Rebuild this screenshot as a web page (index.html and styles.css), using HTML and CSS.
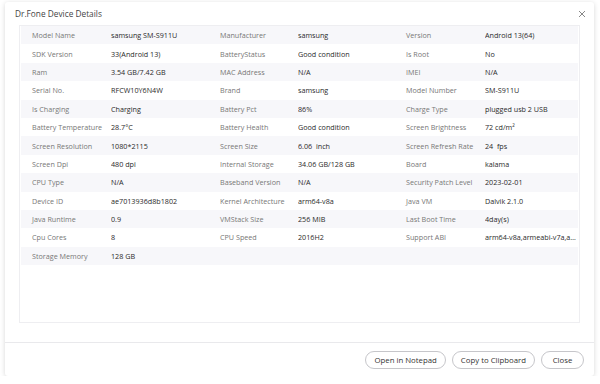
FILE: index.html
```html
<!DOCTYPE html>
<html lang="en">
<head>
  <meta charset="UTF-8" />
  <title>Dr.Fone Device Details</title>
  <link rel="stylesheet" href="styles.css">
</head>
<body>

  <div class="dialog">
    <div class="dialog-head">
      <span class="title">Dr.Fone Device Details</span>
      <svg class="close-x" width="8" height="8" viewBox="0 0 8 8">
        <path d="M1 1L7 7M7 1L1 7" stroke="#888" stroke-width="1" fill="none"/>
      </svg>
    </div>

    <div class="dialog-body">
      <div class="panel">
        <div class="row">
          <span class="key">Model Name</span><span class="val">samsung SM-S911U</span>
          <span class="key">Manufacturer</span><span class="val">samsung</span>
          <span class="key">Version</span><span class="val">Android 13(64)</span>
        </div>
        <div class="row">
          <span class="key">SDK Version</span><span class="val">33(Android 13)</span>
          <span class="key">BatteryStatus</span><span class="val">Good condition</span>
          <span class="key">Is Root</span><span class="val">No</span>
        </div>
        <div class="row">
          <span class="key">Ram</span><span class="val">3.54 GB/7.42 GB</span>
          <span class="key">MAC Address</span><span class="val">N/A</span>
          <span class="key">IMEI</span><span class="val">N/A</span>
        </div>
        <div class="row">
          <span class="key">Serial No.</span><span class="val">RFCW10Y6N4W</span>
          <span class="key">Brand</span><span class="val">samsung</span>
          <span class="key">Model Number</span><span class="val">SM-S911U</span>
        </div>
        <div class="row">
          <span class="key">Is Charging</span><span class="val">Charging</span>
          <span class="key">Battery Pct</span><span class="val">86%</span>
          <span class="key">Charge Type</span><span class="val">plugged usb 2 USB</span>
        </div>
        <div class="row">
          <span class="key">Battery Temperature</span><span class="val">28.7°C</span>
          <span class="key">Battery Health</span><span class="val">Good condition</span>
          <span class="key">Screen Brightness</span><span class="val">72 cd/m²</span>
        </div>
        <div class="row">
          <span class="key">Screen Resolution</span><span class="val">1080*2115</span>
          <span class="key">Screen Size</span><span class="val">6.06&nbsp; inch</span>
          <span class="key">Screen Refresh Rate</span><span class="val">24&nbsp; fps</span>
        </div>
        <div class="row">
          <span class="key">Screen Dpi</span><span class="val">480 dpi</span>
          <span class="key">Internal Storage</span><span class="val">34.06 GB/128 GB</span>
          <span class="key">Board</span><span class="val">kalama</span>
        </div>
        <div class="row">
          <span class="key">CPU Type</span><span class="val">N/A</span>
          <span class="key">Baseband Version</span><span class="val">N/A</span>
          <span class="key">Security Patch Level</span><span class="val">2023-02-01</span>
        </div>
        <div class="row">
          <span class="key">Device ID</span><span class="val">ae7013936d8b1802</span>
          <span class="key">Kernel Architecture</span><span class="val">arm64-v8a</span>
          <span class="key">Java VM</span><span class="val">Dalvik 2.1.0</span>
        </div>
        <div class="row">
          <span class="key">Java Runtime</span><span class="val">0.9</span>
          <span class="key">VMStack Size</span><span class="val">256 MIB</span>
          <span class="key">Last Boot Time</span><span class="val">4day(s)</span>
        </div>
        <div class="row">
          <span class="key">Cpu Cores</span><span class="val">8</span>
          <span class="key">CPU Speed</span><span class="val">2016H2</span>
          <span class="key">Support ABI</span><span class="val">arm64-v8a,armeabi-v7a,a...</span>
        </div>
        <div class="row">
          <span class="key">Storage Memory</span><span class="val">128 GB</span>
          <span class="key"></span><span class="val"></span>
          <span class="key"></span><span class="val"></span>
        </div>
      </div>
    </div>

    <div class="dialog-foot">
      <button class="btn">Open in Notepad</button>
      <button class="btn">Copy to Clipboard</button>
      <button class="btn">Close</button>
    </div>
  </div>

</body>
</html>
```

FILE: styles.css
```css
* {
  box-sizing: border-box;
}

html, body {
  margin: 0;
  padding: 0;
  background: #fff;
  font-family: 'Open Sans', 'Noto Sans', sans-serif;
  color: #333;
}

.dialog {
  width: 589px;
  height: 374px;
  margin: 2px 0 0 5px;
  background: #fff;
  border-radius: 3px;
  box-shadow: 0 1px 5px rgba(0, 0, 0, 0.16);
  display: flex;
  flex-direction: column;
}

.dialog-head {
  height: 23px;
  padding: 0 8px 0 10px;
  display: flex;
  align-items: center;
  justify-content: space-between;
}

.title {
  font-size: 8.3px;
  color: #444;
}

.dialog-body {
  flex: 1;
  padding: 0 14px 14px 14px;
  border-bottom: 1px solid #e9e9ec;
}

.panel {
  height: 298px;
  border: 1px solid #eeeef1;
  padding: 0 1px;
}

.row {
  display: grid;
  grid-template-columns: 79px 109px 78px 108px 79px 1fr;
  height: 18.4px;
  align-items: center;
  padding-left: 11px;
  font-size: 7.2px;
}

.row:nth-child(odd) {
  background: #f7f7fa;
}

.key {
  color: #777;
  white-space: nowrap;
}

.val {
  color: #2a2a2a;
  white-space: nowrap;
  overflow: hidden;
  text-overflow: ellipsis;
  padding-right: 2px;
}

.dialog-foot {
  height: 33px;
  display: flex;
  align-items: center;
  justify-content: flex-end;
  gap: 6px;
  padding-right: 10px;
}

.btn {
  height: 18px;
  min-width: 43px;
  padding: 0 8px;
  border: 1px solid #c6c6ca;
  border-radius: 9px;
  background: #fff;
  font-family: 'Open Sans', 'Noto Sans', sans-serif;
  font-size: 7.8px;
  color: #333;
}
```
